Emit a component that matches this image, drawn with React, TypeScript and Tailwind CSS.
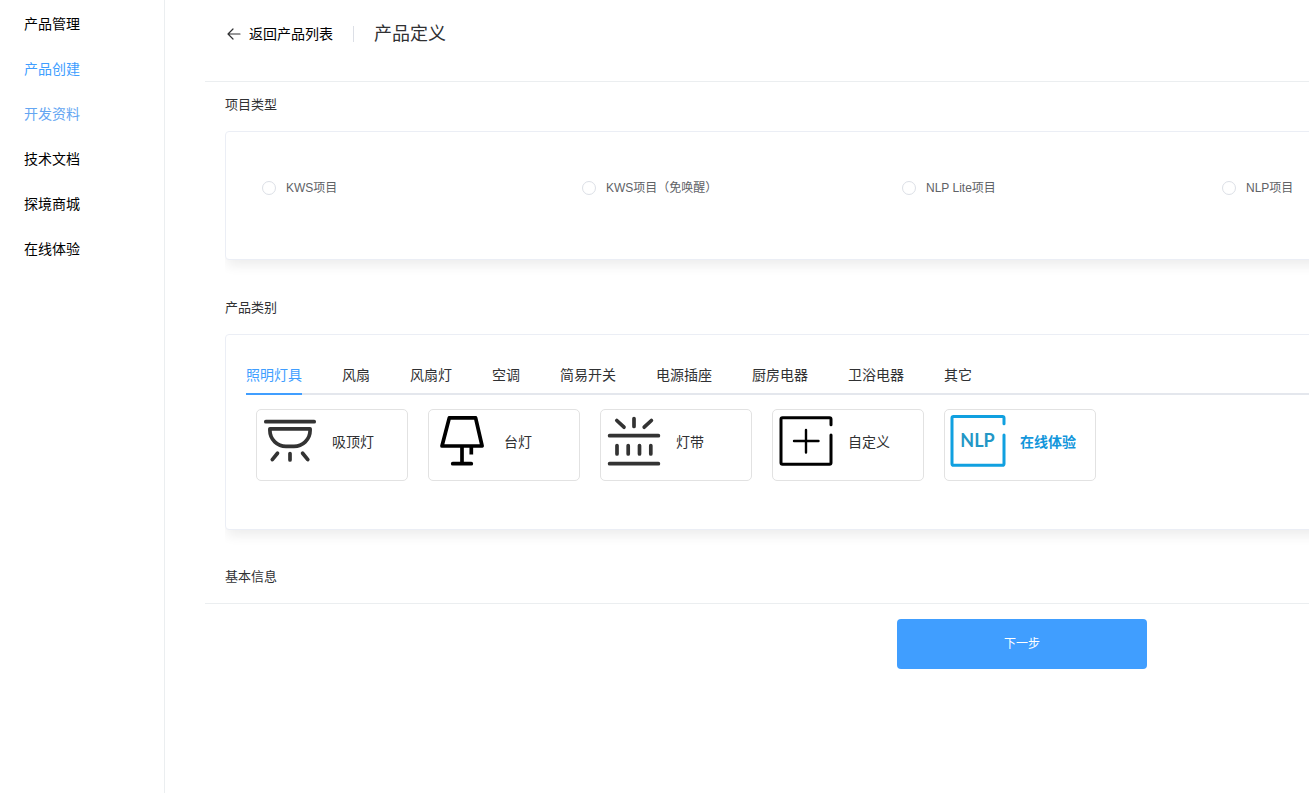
import { useState } from "react";
import type { ReactNode } from "react";

const navItems = [
  { label: "产品管理", color: "text-black" },
  { label: "产品创建", color: "text-[#409eff]" },
  { label: "开发资料", color: "text-[#64a6f2]" },
  { label: "技术文档", color: "text-black" },
  { label: "探境商城", color: "text-black" },
  { label: "在线体验", color: "text-black" },
];

const projectTypes = ["KWS项目", "KWS项目（免唤醒）", "NLP Lite项目", "NLP项目"];

const categories = [
  "照明灯具",
  "风扇",
  "风扇灯",
  "空调",
  "简易开关",
  "电源插座",
  "厨房电器",
  "卫浴电器",
  "其它",
];

function Icon({ children, color }: { children: ReactNode; color: string }) {
  return (
    <svg
      viewBox="0 0 56 56"
      className="size-14 shrink-0"
      fill="none"
      stroke={color}
      strokeWidth="3.7"
      strokeLinecap="round"
      strokeLinejoin="round"
      aria-hidden="true"
    >
      {children}
    </svg>
  );
}

const products = [
  {
    label: "吸顶灯",
    icon: (
      <Icon color="#333333">
        <path d="M3.8 8.7H52.2M7.9 15.8H48.1V17.5C48.1 26.5 40.5 33.4 32 33.4H24C15.5 33.4 7.9 26.5 7.9 17.5ZM15.5 40.3L10.3 46.6M28 40.5V47M40.6 40.3L45.8 46.6" />
      </Icon>
    ),
  },
  {
    label: "台灯",
    icon: (
      <Icon color="#000000">
        <path d="M15.3 4.9H41.6L48.1 33H8ZM28 33V50.7M18.7 50.7H37.3" />
        <path d="M37.3 33V41.5" strokeLinecap="butt" />
      </Icon>
    ),
  },
  {
    label: "灯带",
    icon: (
      <Icon color="#333333">
        <path d="M3.6 22.7H52.4M3.6 50.7H52.4M10.8 7.5L18 14.2M28 5.5V13.5M45.4 7.5L38.2 14.2M11 32.5V41M22.2 32.5V41M33.5 32.5V41M44.8 32.5V41" />
      </Icon>
    ),
  },
  {
    label: "自定义",
    icon: (
      <Icon color="#000000">
        <path
          strokeWidth="3"
          d="M53 11.8V6.2Q53 4.7 51.5 4.7H4.5Q3 4.7 3 6.2V49.8Q3 51.3 4.5 51.3H51.5Q53 51.3 53 49.8V22"
        />
        <path strokeWidth="2.4" d="M16 28H40.5M28 17V39.5" />
      </Icon>
    ),
  },
  {
    label: "在线体验",
    highlight: true,
    icon: (
      <Icon color="#10a0e0">
        <path
          strokeWidth="3"
          d="M54 10.7V5Q54 3.4 52.4 3.4H3.6Q2 3.4 2 5V50.7Q2 52.3 3.6 52.3H52.4Q54 52.3 54 50.7V22"
        />
        <text
          x="27.5"
          y="34"
          textAnchor="middle"
          fontFamily="Lato, sans-serif"
          fontWeight="700"
          fontSize="18"
          fill="#2397c6"
          stroke="none"
        >
          NLP
        </text>
      </Icon>
    ),
  },
];

function SectionTitle({ children }: { children: ReactNode }) {
  return (
    <h2 className="flex h-[49px] items-center px-5 pb-0.5 text-[13px] text-[#303133]">
      {children}
    </h2>
  );
}

function Card({ children }: { children: ReactNode }) {
  return (
    <div className="mx-5 rounded border border-[#ebeef5] bg-white px-5 shadow-[0_8px_12px_-2px_rgba(0,0,0,0.07)] [clip-path:inset(0_0_-24px_0)]">
      {children}
    </div>
  );
}

export default function App() {
  const [type, setType] = useState("");
  const [category, setCategory] = useState("照明灯具");

  return (
    <div className="flex min-h-screen overflow-hidden bg-white font-['Liberation_Sans','Noto_Sans_CJK_SC',sans-serif] text-sm text-[#303133]">
      <aside className="w-[165px] shrink-0 border-r border-[#ebeef0] pt-px">
        <nav>
          {navItems.map((item) => (
            <a
              key={item.label}
              href="#"
              className={`flex h-[45px] items-center pl-6 ${item.color}`}
            >
              {item.label}
            </a>
          ))}
        </nav>
      </aside>

      <main className="ml-10 min-w-[1634px] flex-1">
        <header className="flex h-[82px] items-start border-b border-[#ebeef0] px-5 pt-5">
          <div className="flex h-7 items-center">
            <a href="#" className="flex items-center gap-2 text-black">
              <svg
                viewBox="0 0 16 16"
                className="size-4"
                fill="none"
                stroke="#303133"
                strokeWidth="1.2"
                strokeLinecap="round"
                strokeLinejoin="round"
                aria-hidden="true"
              >
                <path d="M15 8H3M8 3L3 8L8 13" />
              </svg>
              返回产品列表
            </a>
            <span className="mx-5 h-4 w-px bg-[#dcdfe6]" />
            <h1 className="text-lg">产品定义</h1>
          </div>
        </header>

        <section>
          <SectionTitle>项目类型</SectionTitle>
          <Card>
            <div className="flex h-[127px] items-start pt-12">
              {projectTypes.map((name) => (
                <label
                  key={name}
                  className="flex h-4 w-80 items-center gap-[10px] pl-4 text-xs text-[#606266]"
                >
                  <input
                    type="radio"
                    name="project-type"
                    checked={type === name}
                    onChange={() => setType(name)}
                    className="size-[14px] appearance-none rounded-full border border-[#dcdfe6] bg-white checked:border-4 checked:border-[#409eff]"
                  />
                  {name}
                </label>
              ))}
            </div>
          </Card>
        </section>

        <section className="mt-[25px]">
          <SectionTitle>产品类别</SectionTitle>
          <Card>
            <div className="h-[194px] pt-5">
              <div
                role="tablist"
                className="flex h-10 gap-10 border-b-2 border-[#e4e7ed]"
              >
                {categories.map((name) => (
                  <button
                    key={name}
                    type="button"
                    role="tab"
                    aria-selected={category === name}
                    onClick={() => setCategory(name)}
                    className={`-mb-0.5 border-b-2 pt-0.5 ${
                      category === name
                        ? "border-[#409eff] text-[#409eff]"
                        : "border-transparent"
                    }`}
                  >
                    {name}
                  </button>
                ))}
              </div>
              <div className="mt-[14px] flex gap-5 px-[10px]">
                {products.map((product) => (
                  <button
                    key={product.label}
                    type="button"
                    className={`flex h-[72px] w-[152px] items-start gap-[14px] rounded-[5px] border border-[#e2e2e2] pt-[3px] pl-[5px] leading-[58px] ${
                      product.highlight ? "font-bold text-[#1296db]" : ""
                    }`}
                  >
                    {product.icon}
                    {product.label}
                  </button>
                ))}
              </div>
            </div>
          </Card>
        </section>

        <section className="mt-[25px]">
          <div className="-mt-px border-b border-[#ebeef0]">
            <SectionTitle>基本信息</SectionTitle>
          </div>
          <div className="flex justify-center pt-[15px]">
            <button
              type="button"
              className="h-[50px] w-[250px] rounded bg-[#409eff] text-xs text-white"
            >
              下一步
            </button>
          </div>
        </section>
      </main>
    </div>
  );
}
